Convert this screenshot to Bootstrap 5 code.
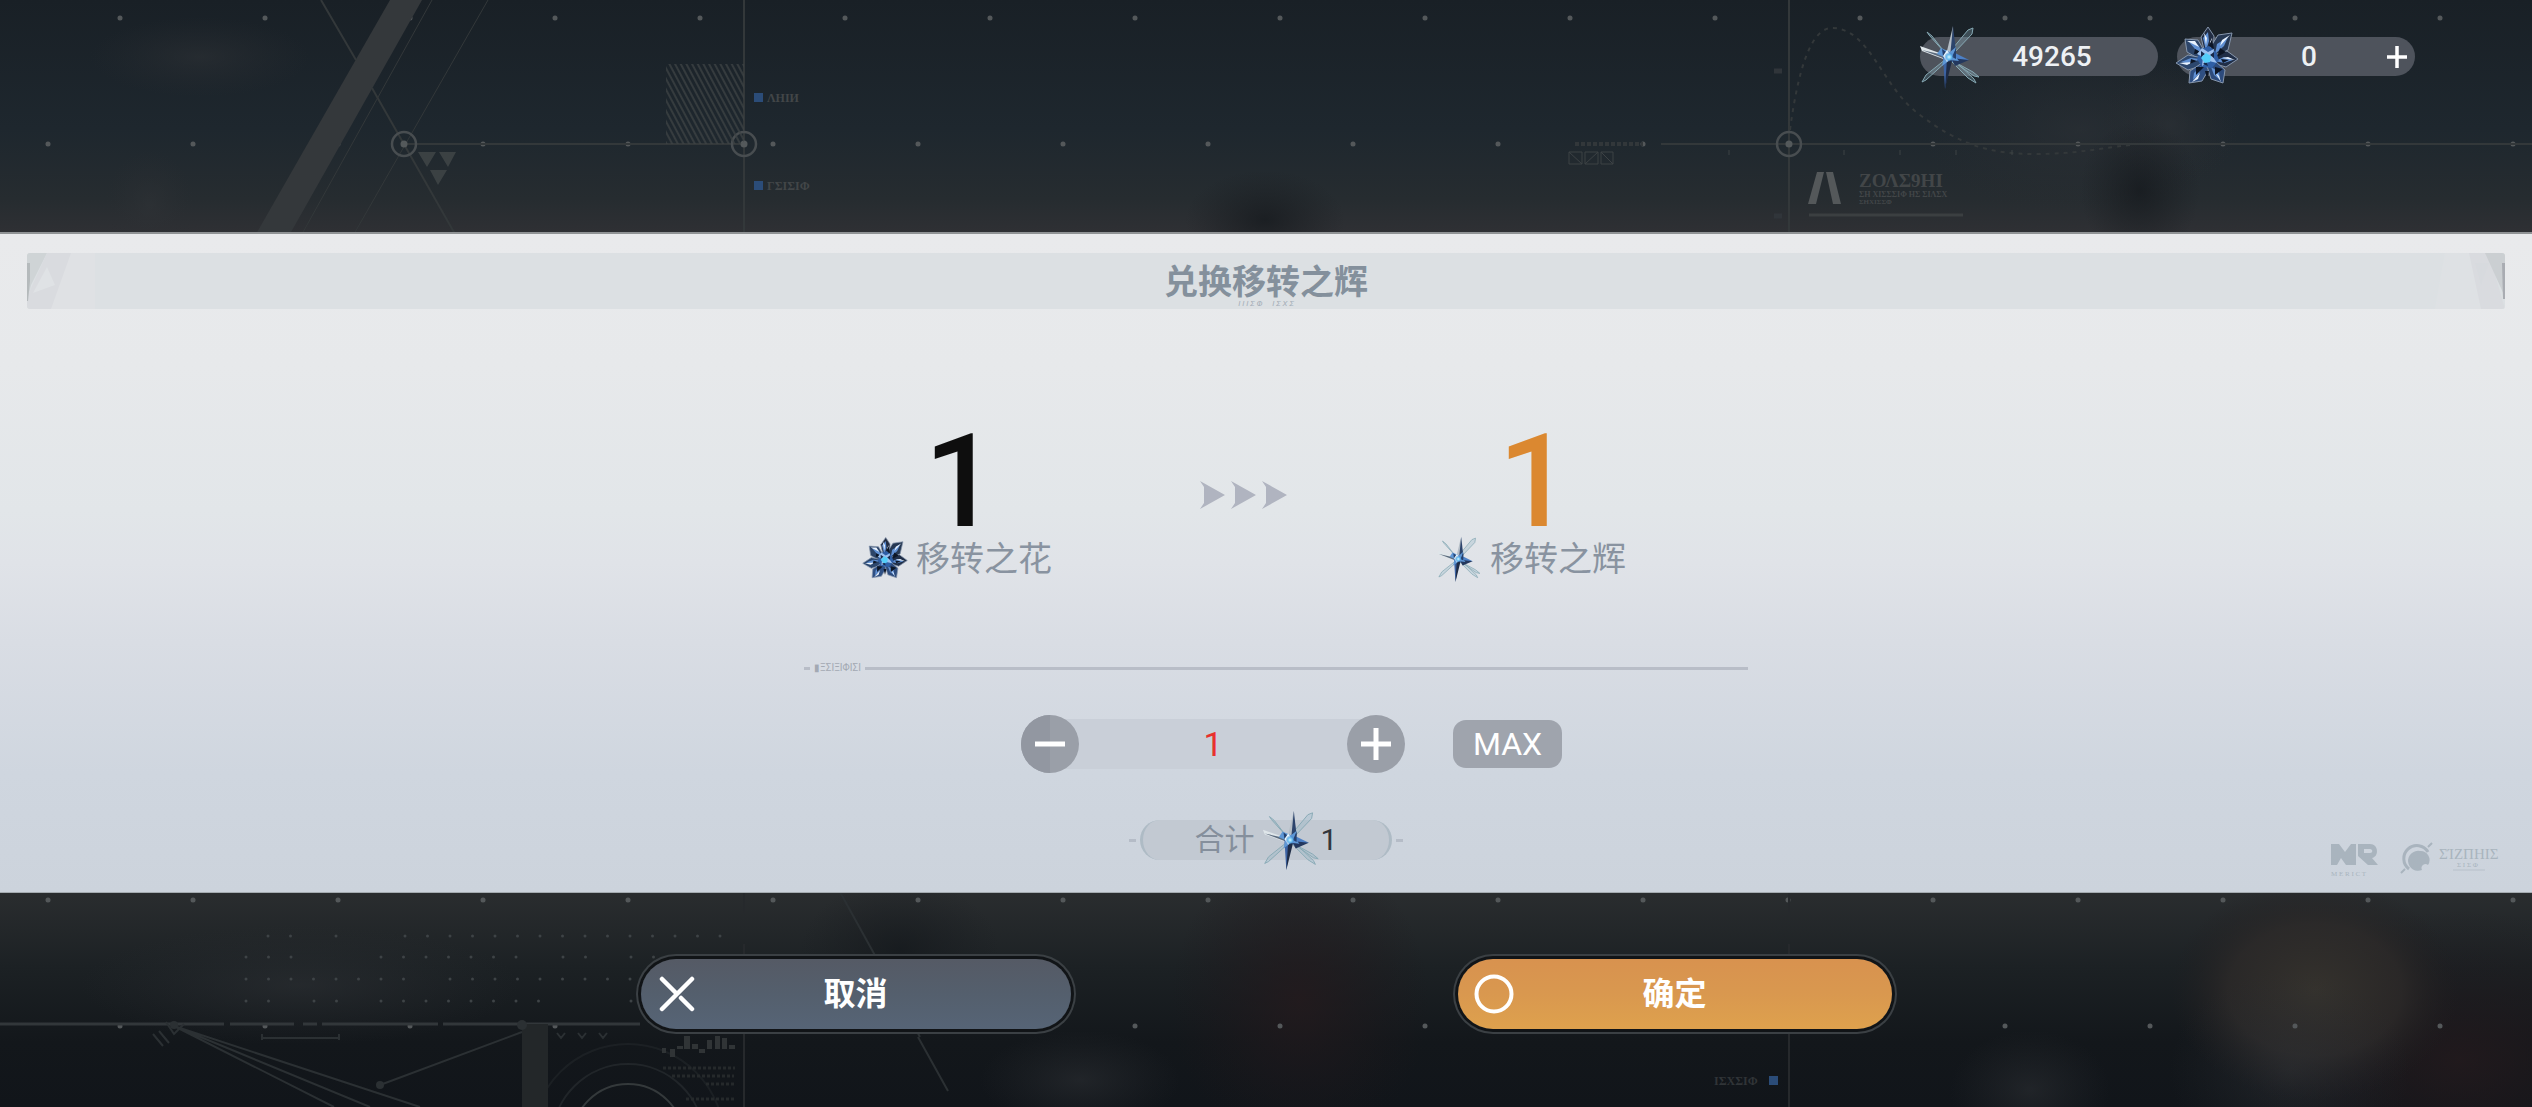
<!DOCTYPE html>
<html lang="zh-CN">
<head>
<meta charset="utf-8">
<meta name="viewport" content="width=device-width, initial-scale=1">
<title>兑换移转之辉</title>
<link href="https://cdn.jsdelivr.net/npm/bootstrap@5.3.0/dist/css/bootstrap.min.css" rel="stylesheet">
<style>
  body { font-family: Roboto, "Noto Sans CJK SC", sans-serif; background: #12161b; color: #858f9c; }
  .screen { position: relative; isolation: isolate; overflow: hidden; }
  .scenery { position: absolute; inset: 0; width: 100%; height: 100%; z-index: -1; }
  .wallet { padding: 37px 117px 156px; gap: 19px; }
  .purse { width: 238px; height: 39px; background: #4e535c; color: #eef1f4; font-size: 28px; font-weight: 500; line-height: 39px; }
  .purse .gem { width: 64px; height: 64px; margin: 0 -2px; }
  .purse .amount { width: 144px; text-align: center; }
  .plus-btn { color: #fff; width: 32px; line-height: 0; }
  .sheet { background: linear-gradient(#e9eaec 0%, #e7e9eb 20%, #e2e6e9 42%, #e0e3e8 50%, #d9dde4 62%, #cfd6df 82%, #ccd3dc 100%); border-top: 2px solid #909395; border-bottom: 1px solid #a4abb0; padding: 19px 27px 12px; }
  .titlebar { height: 56px; background: #dce0e3; border-radius: 3px; overflow: hidden; }
  .titlebar h1 { font-size: 34px; font-weight: 700; line-height: 58px; color: #84909c; }
  .facet { width: 70px; height: 56px; }
  .title-sub { position: absolute; bottom: 0; left: 0; right: 0; font-size: 8px; line-height: 10px; color: #a3adb7; font-style: italic; }
  .shifted { padding-left: 20px; }
  .trade { max-width: 944px; }
  .swap { padding: 125px 122px 0 58px; }
  .big { font-size: 130px; line-height: 96px; font-weight: 500; color: #0e0e0e; padding-left: 8px; }
  .big.gold { color: #db8830; }
  .item-name { font-size: 34px; line-height: 44px; margin-top: 6px; gap: 8px; color: #8993a0; }
  .item-name .gem { width: 46px; height: 46px; }
  .arrows { margin-bottom: 26px; }
  .rule-row { height: 16px; margin-top: 78px; gap: 4px; font-size: 10px; line-height: 16px; color: #a3a9b3; }
  .rule-row .dash { width: 6px; height: 3px; background: #b8bdc7; }
  .rule-row .bar { height: 3px; background: #b8bdc7; }
  .picker { padding-left: 217px; margin-top: 39px; }
  .round-btn { width: 58px; height: 58px; background: #9a9fa8; border: 0; padding: 0; line-height: 0; position: relative; border-radius: 50%; }
  .qty { width: 326px; height: 50px; margin: 0 -29px; border: 0; background: #c9cfd8; text-align: center; font-size: 34px; color: #e8312c; }
  .max-btn { width: 109px; height: 48px; margin-left: 48px; border: 0; border-radius: 13px; background: #9fa4ad; color: #fff; font-size: 32px; line-height: 48px; padding: 0; }
  .foot-row { margin-top: 47px; }
  .side { flex: 1 1 0; }
  .tick { width: 7px; height: 3px; background: #b5bcc7; margin: 0 4px; }
  .sum { width: 252px; height: 40px; border-radius: 20px; background: #c2c9d2; border: solid #aebbc5; border-width: 0 3px; font-size: 30px; line-height: 40px; gap: 6px; }
  .sum .gem { width: 60px; height: 60px; margin: -10px -2px -10px 0; }
  .sum output { color: #33373c; margin-left: -4px; }
  .marks { margin: 22px 0 0; }
  .actions { padding: 66px 0 60px; gap: 387px; }
  .act { width: 430px; height: 70px; border: 0; border-radius: 35px; color: #fff; font-size: 32px; font-weight: 700; line-height: 70px; padding: 0 16px; display: grid; grid-template-columns: 1fr auto 1fr; align-items: center; box-shadow: 0 0 0 3px #111417, 0 0 0 5px #3b4044; }
  .act.no { background: linear-gradient(#555a65, #545f6d 50%, #566476); }
  .act.yes { width: 434px; background: linear-gradient(#d8924f, #d9984f 50%, #dea14d); }
</style>
<script src="https://cdn.jsdelivr.net/npm/bootstrap@5.3.0/dist/js/bootstrap.bundle.min.js"></script>
</head>
<body>

<!-- shared gem drawings -->
<svg width="0" height="0" class="position-absolute" aria-hidden="true">
  <defs>
    <radialGradient id="core"><stop offset="0" stop-color="#d6f6ff"/><stop offset=".5" stop-color="#66bdf0"/><stop offset="1" stop-color="#2f66b8" stop-opacity="0"/></radialGradient>
    <symbol id="star" viewBox="0 0 64 64">
      <g fill="#8fb2c2" fill-opacity=".3" stroke="#86a9b4" stroke-width="1">
        <path d="M30 29L50 5l5-2-1 6L35 29zM28 29L11 10l-2-3 5 4zM28 34L8 50l-4 7 4-2 22-20zM33 36l17 17 8 5-2-4-20-19zM33 35l22 12 6 5-5-1z"/>
      </g>
      <path d="M30 31L2 21l2 5 24 9z" fill="#dfe6ea"/><path d="M4 25l26 6v4z" fill="#5c6b7d"/>
      <path d="M35 1l-7 29 6 1z" fill="#b4bdc6"/><path d="M35 1l-3 31 6-5z" fill="#2c446c"/>
      <path d="M27 64l-2-32 8-2z" fill="#3c63a4"/><path d="M27 64l8-32-6 1z" fill="#1f2c46"/>
      <path d="M33 26l18 9-17 2z" fill="#4d80c6"/><path d="M33 33l18 2-14 6z" fill="#24385e"/>
      <path d="M23 23l9 4 6-5-2 8 5 6-9-1-8 6 2-9-7-3z" fill="#5e97d6"/><path d="M24 24l7 5-1 5-5-3zM38 23l-4 9 4 2z" fill="#24406e"/>
      <path d="M29 25l4 6-4 6-4-6z" fill="#eaf9ff"/>
      <circle cx="31" cy="32" r="5" fill="url(#core)"/>
    </symbol>
    <symbol id="flower" viewBox="0 0 64 64">
      <g stroke="#8797ad" stroke-width="1">
        <path d="M33 2l6 9-1 17-8 1-4-17z" fill="#222d43"/><path d="M57 8l-4 17-14 7-4-9 8-13z" fill="#263853"/>
        <path d="M10 14l13 1 8 14-5 6-14-8z" fill="#2d4569"/><path d="M1 38l12-8 15 3-2 8-13 4z" fill="#2c476e"/>
        <path d="M63 34l-12 8-14-4 2-8 13-4z" fill="#202e47"/><path d="M14 58l1-12 12-8 7 6-7 12z" fill="#2f4f82"/>
        <path d="M48 58l-12-4-4-13 8-5 10 9z" fill="#2d4b7c"/>
      </g>
      <path d="M33 7l1 9-3 10-3-13zM53 12l-4 9-9 8 2-10zM14 17l9 3 6 9-9-5zM6 37l10-4 9 1-10 5zM58 35l-9 3-9-2 9-4zM18 55l1-7 7-7-2 8zM45 55l-6-5-3-8 8 5z" fill="#5f8fd2"/>
      <path d="M29 8l3 5-1 7zM55 10l-8 5-2 6zM12 16l8 0 4 6zM4 38l8 2 6-3zM60 35l-7-3-6 1zM17 57l6-3 2-6zM46 57l-2-6-4-4zM37 13l1 9-3-5z" fill="#e9f3ff"/>
      <path d="M20 24l7 4-8 1zM45 23l-3 9 9-5zM21 42l8 0-8 8zM40 42l8 2-8 6zM37 14l2 10-5-3zM30 46l4 0-2 8zM16 34l6 2-7 3zM46 34l8 1-6 3z" fill="#0d1626"/>
      <path d="M26 24l8-3 7 6 3 8-7 8-10-1-5-8z" fill="#2f5fa6"/><path d="M27 23l6 4 6-3-1 8 4 6-8-2-7 5 1-9-6-3z" fill="#9cc0ee"/>
      <path d="M26 26l4 3-4 3zM39 27l-4 3 4 3zM28 39l3-3 2 5z" fill="#16294a"/>
      <path d="M31 28l5 3-1 6-5 1-4-5z" fill="#53cdf8"/>
    </symbol>
  </defs>
</svg>

<div class="screen d-flex flex-column min-vh-100">

  <svg class="scenery" viewBox="0 0 2532 1107" preserveAspectRatio="xMidYMid slice" aria-hidden="true">
    <defs>
      <linearGradient id="topShade" x1="0" y1="0" x2="0" y2="1"><stop offset="0" stop-color="#192026"/><stop offset=".55" stop-color="#1e272e"/><stop offset=".85" stop-color="#262c30"/><stop offset="1" stop-color="#2f3034"/></linearGradient>
      <linearGradient id="lowShade" x1="0" y1="0" x2="0" y2="1"><stop offset="0" stop-color="#2a2d2f"/><stop offset=".35" stop-color="#1c2124"/><stop offset=".7" stop-color="#13171b"/><stop offset="1" stop-color="#11151a"/></linearGradient>
      <radialGradient id="warm"><stop offset="0" stop-color="#35322d"/><stop offset=".6" stop-color="#2d2a29" stop-opacity=".8"/><stop offset="1" stop-color="#201e20" stop-opacity="0"/></radialGradient>
      <radialGradient id="grey"><stop offset="0" stop-color="#303337" stop-opacity=".5"/><stop offset="1" stop-color="#2a2d31" stop-opacity="0"/></radialGradient>
      <radialGradient id="wine"><stop offset="0" stop-color="#241a1d" stop-opacity=".8"/><stop offset="1" stop-color="#1d181c" stop-opacity="0"/></radialGradient>
      <radialGradient id="shade"><stop offset="0" stop-color="#14181c" stop-opacity=".7"/><stop offset="1" stop-color="#191c20" stop-opacity="0"/></radialGradient>
      <pattern id="dots" width="145" height="252" patternUnits="userSpaceOnUse"><g fill="#54585a"><circle cx="120" cy="18" r="2.5"/><circle cx="48" cy="144" r="2.5"/></g></pattern>
      <pattern id="hatch" width="5" height="10" patternUnits="userSpaceOnUse" patternTransform="rotate(-28)"><path d="M1 0v10" stroke="#3d4244" stroke-width="1.5"/></pattern>
    </defs>
    <rect width="2532" height="234" fill="url(#topShade)"/>
    <rect y="892" width="2532" height="215" fill="url(#lowShade)"/>
    <ellipse cx="200" cy="57" rx="110" ry="40" fill="url(#grey)"/><ellipse cx="150" cy="205" rx="45" ry="55" fill="url(#grey)"/>
    <ellipse cx="2080" cy="130" rx="160" ry="90" fill="url(#grey)"/><ellipse cx="2170" cy="125" rx="70" ry="60" fill="url(#grey)"/>
    <ellipse cx="1265" cy="220" rx="80" ry="50" fill="url(#shade)"/><ellipse cx="2140" cy="190" rx="60" ry="70" fill="url(#shade)"/>
    <ellipse cx="1300" cy="1000" rx="130" ry="150" fill="url(#wine)"/><ellipse cx="2460" cy="1060" rx="220" ry="150" fill="url(#wine)"/>
    <ellipse cx="2315" cy="990" rx="145" ry="110" fill="url(#warm)"/><ellipse cx="2290" cy="1070" rx="120" ry="100" fill="url(#grey)"/>
    <ellipse cx="2030" cy="1090" rx="80" ry="60" fill="url(#grey)"/><ellipse cx="1080" cy="1080" rx="100" ry="50" fill="url(#grey)"/>
    <ellipse cx="300" cy="985" rx="220" ry="60" fill="url(#grey)"/><ellipse cx="900" cy="950" rx="100" ry="70" fill="url(#shade)"/>
    <rect width="2532" height="1107" fill="url(#dots)"/>

    <path d="M390 0h32L290 234h-34z" fill="#34383b"/>
    <g fill="none" stroke="#33383a" stroke-width="2">
      <path d="M321 0l35 60M372 88l83 146M404 144h340M744 0v234M1789 0v234M1661 144h871" />
      <path d="M744 892v22M744 944v163M1789 892v22M1789 944v163" stroke="#26292c"/>
      <path d="M432 0L302 234M488 0L354 234" stroke-width="1"/>
      <g stroke="#484d50" stroke-width="2.5"><circle cx="404" cy="144" r="12"/><circle cx="744" cy="144" r="12"/><circle cx="1789" cy="144" r="12"/></g>
      <path d="M1790 130C1800 55 1815 28 1832 28c38 0 50 60 88 87 40 30 70 39 115 39 40 0 60-5 95-9" stroke-dasharray="4 5"/>
    </g>
    <g fill="#54595b"><circle cx="404" cy="144" r="3.5"/><circle cx="744" cy="144" r="3.5"/><circle cx="1789" cy="144" r="3.5"/></g>
    <rect x="666" y="64" width="78" height="80" fill="url(#hatch)"/>
    <path d="M418 152h18l-9 15zM439 152h17l-8 15zM430 170h17l-9 15z" fill="#3b4143"/>
    <g fill="#2b4c78"><path d="M754 93h9v9h-9zM754 181h9v9h-9zM1769 1076h9v9h-9z"/></g>
    <g fill="#424648" font-family="Liberation Serif, serif" font-weight="700" font-size="12">
      <text x="767" y="102">ΛHIИ</text><text x="767" y="190">ΓΣΙΣΙΦ</text><text x="1714" y="1085" fill="#303437">ΙΣΧΣΙΦ</text>
      <text x="1859" y="187" font-size="19">ΖΟΛΣ9ΗΙ</text>
      <text x="1859" y="197" font-size="8">ΣΗ ΧΙΣΣΣΙΦ ΗΣ ΣΙΛΣΧ</text><text x="1859" y="204" font-size="7">ΣΗΧΙΣΣΦ</text>
    </g>
    <path d="M1808 204l9-32h7l-8 32zM1826 172h7l8 32h-8z" fill="#54585a"/>
    <path d="M1809 215h154" stroke="#3b3f41" stroke-width="3"/><path d="M1575 144h68" stroke="#32373a" stroke-width="4" stroke-dasharray="4 2"/>
    <path d="M1569 152h13v12h-13zl13 12M1585 152h13v12h-13zm13 0l-13 12M1601 152h12v12h-12zl12 12M1729 150v5M1844 150v5M1900 150v5M1956 150v5M2012 150v5" fill="none" stroke="#3d4245"/>
    <path d="M1782 71h-8M1782 216h-8" stroke="#30353a" stroke-width="5"/>

    <g fill="none" stroke="#2b3033" stroke-width="2">
      <path d="M0 1024h224M230 1024h64M303 1024h14M322 1024h116M443 1024h197" stroke="#32373a" stroke-width="3"/>
      <path d="M174 1026l246 81M174 1026l160 81M174 1026l196 81M522 1032l-142 53M262 1034v6M262 1038h77M339 1034v6"/>
      <path d="M153 1034l10 12M159 1031l10 12M166 1022l8 12 10-10"/><path d="M557 1033l4 5 4-5M578 1033l4 5 4-5M599 1033l4 5 4-5"/>
      <path d="M840 892l80 145M918 1037l30 54" /><circle cx="628" cy="1140" r="56" stroke="#34393b"/><circle cx="628" cy="1140" r="76" opacity=".6"/><circle cx="628" cy="1140" r="96" opacity=".4"/>
    </g>
    <path d="M522 1024h26v83h-26z" fill="#232729"/><circle cx="380" cy="1085" r="4" fill="#2b3033"/><circle cx="522" cy="1025" r="5" fill="#2b3033"/><circle cx="174" cy="1025" r="4" fill="#2b3033"/>
    <path d="M662 1048h4v5h-4zM670 1049h5v8h-5zM677 1046h6v3h-6zM684 1036h6v13h-6zM692 1044h6v5h-6zM699 1049h6v4h-6zM707 1040h5v9h-5zM715 1036h5v13h-5zM722 1038h5v11h-5zM729 1045h6v4h-6z" fill="#303436"/>
    <g stroke="#3e4346" stroke-width="3" stroke-linecap="round" stroke-dasharray="0 22.5" fill="none">
      <path d="M268 936h24M336 936h2M405 936h320M246 957h48M381 957h140M563 957h26M631 957h95M246 979h164M450 979h270M246 1001h25M314 1001h25M381 1001h162M631 1001h3"/>
    </g>
    <g stroke="#25292b" stroke-width="3" stroke-dasharray="3 2"><path d="M663 1068h72M672 1076h62M706 1084h28M686 1099h48"/></g>
  </svg>

  <header class="wallet d-flex justify-content-end">
    <div class="purse rounded-pill d-flex align-items-center">
      <svg class="gem flex-shrink-0" role="img" aria-label="移转之辉"><use href="#star"/></svg>
      <span class="amount">49265</span>
    </div>
    <div class="purse rounded-pill d-flex align-items-center">
      <svg class="gem flex-shrink-0" role="img" aria-label="移转之花"><use href="#flower"/></svg>
      <span class="amount">0</span>
      <button type="button" class="plus-btn btn p-0 border-0" aria-label="添加"><svg width="22" height="22" viewBox="0 0 22 22"><path d="M11 0v22M1 11h20" stroke="#fff" stroke-width="3.5"/></svg></button>
    </div>
  </header>

  <main class="sheet">
    <div class="titlebar d-flex justify-content-between position-relative">
      <svg class="facet" viewBox="0 0 70 56" aria-hidden="true"><path d="M0 0h20L4 32 0 48z" fill="#cfd4d6"/><path d="M20 0h46L24 56H0V44z" fill="#d9dbdf"/><path d="M20 14l8 18-22 8z" fill="#dfe2e5"/><path d="M44 0h24v56H24z" fill="#dfe1e4"/><path d="M0 10h3v18L1 48H0z" fill="#b5babc"/></svg>
      <h1 class="m-0">兑换移转之辉</h1>
      <svg class="facet" viewBox="0 0 70 56" aria-hidden="true"><path d="M14 0h40l16 56H34z" fill="#d9dbdf"/><path d="M10 0h24l12 56H0z" fill="#dee1e4"/><path d="M50 0h20v44z" fill="#cbcfd2"/><path d="M40 10l14 0-8 22z" fill="#d7dade"/><path d="M67 10h3v36h-2z" fill="#a9acb2"/></svg>
      <span class="title-sub text-center" aria-hidden="true">Ι Ι Ι Σ Φ &nbsp; &nbsp; Ι Σ Χ Σ</span>
    </div>

    <div class="shifted">
      <section class="trade mx-auto">
        <div class="swap d-flex justify-content-between align-items-center">
          <div class="text-center">
            <div class="big">1</div>
            <div class="item-name d-flex align-items-center"><svg class="gem" aria-hidden="true"><use href="#flower"/></svg><span>移转之花</span></div>
          </div>
          <svg class="arrows" width="88" height="28" viewBox="0 0 88 28" role="img" aria-label="兑换为" fill="#b0b4c0"><path d="M0 0l25 14L0 28l4-6V6zM31 0l25 14-25 14 4-6V6zM62 0l25 14-25 14 4-6V6z"/></svg>
          <div class="text-center">
            <div class="big gold">1</div>
            <div class="item-name d-flex align-items-center"><svg class="gem" aria-hidden="true"><use href="#star"/></svg><span>移转之辉</span></div>
          </div>
        </div>

        <div class="rule-row d-flex align-items-center" aria-hidden="true">
          <span class="dash"></span><span>▮ΞΣΙΞΙΦΙΣΙ</span><span class="bar flex-fill"></span>
        </div>

        <div class="picker d-flex align-items-center">
          <button type="button" class="round-btn" aria-label="减少"><svg width="58" height="58" viewBox="0 0 58 58"><path d="M0 29A29 29 0 0 1 29 0v58A29 29 0 0 1 0 29z" fill="#9297a1"/><path d="M14 29h30" stroke="#fff" stroke-width="5"/></svg></button>
          <input class="qty" type="text" inputmode="numeric" value="1" aria-label="兑换数量">
          <button type="button" class="round-btn" aria-label="增加"><svg width="58" height="58" viewBox="0 0 58 58"><path d="M14 29h30M29 13v32" stroke="#fff" stroke-width="5"/></svg></button>
          <button type="button" class="max-btn">MAX</button>
        </div>
      </section>
    </div>

    <div class="foot-row d-flex align-items-start">
      <div class="side"></div>
      <div class="d-flex align-items-center">
        <span class="tick"></span>
        <div class="sum d-flex align-items-center justify-content-center"><span>合计</span><svg class="gem" aria-hidden="true"><use href="#star"/></svg><output>1</output></div>
        <span class="tick"></span>
      </div>
      <div class="side d-flex justify-content-end">
        <svg class="marks" width="174" height="38" viewBox="0 0 174 38" aria-hidden="true" fill="#a9b4be">
          <path d="M0 2h8l6 8 6-8h5v21H15l-5-7-4 7H0zM27 2h12c9 0 9 13 2 14l6 7H37l-10-9zM33 7v4h6c3 0 3-4 0-4z" fill-rule="evenodd"/>
          <path d="M78 27A13 13 0 1 1 97 10" fill="none" stroke="#a9b4be" stroke-width="3"/><path d="M89 9a9 9 0 0 1 8 14 4 4 0 0 0-6 5 10 10 0 1 1-2-19z"/><path d="M97 5l4-4M70 31l4-4" stroke="#a9b4be" stroke-width="2"/>
          <g font-family="Liberation Serif, serif"><text x="0" y="34" font-size="7">M E R I C T</text><text x="108" y="17" font-size="15">ΣΊΖΠΗΙΣ</text><text x="126" y="25" font-size="7">Σ Ι Σ Φ</text></g><path d="M122 28h32" stroke="#b7c0ca"/>
        </svg>
      </div>
    </div>
  </main>

  <footer class="actions d-flex justify-content-center flex-grow-1">
    <button type="button" class="act no"><svg width="38" height="38" viewBox="0 0 38 38" aria-hidden="true"><path d="M5 4l15 15M35 4L5 34M24 23l11 11" stroke="#fff" stroke-width="4.5" stroke-linecap="round"/></svg><span>取消</span></button>
    <button type="button" class="act yes"><svg width="40" height="40" viewBox="0 0 40 40" aria-hidden="true"><circle cx="20" cy="20" r="17.5" fill="none" stroke="#fff" stroke-width="4"/></svg><span>确定</span></button>
  </footer>
</div>
</body>
</html>
